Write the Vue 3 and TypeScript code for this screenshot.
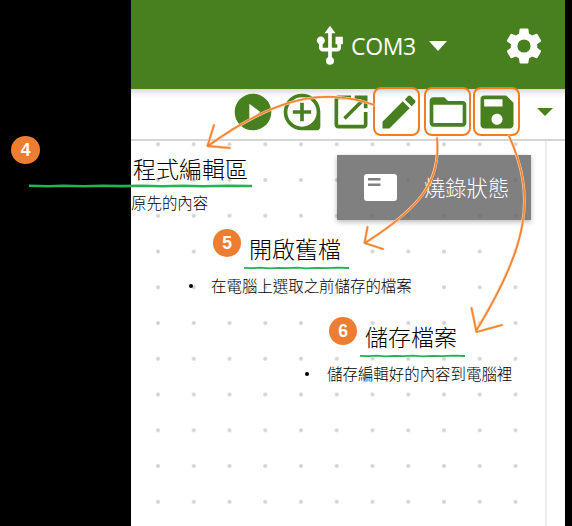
<script setup lang="ts">
interface Tool {
  name: string
  path: string
  marked: boolean
}

interface Note {
  id: number
  title: string
  detail: string
  bullet: boolean
}

const tools: Tool[] = [
  { name: 'play', marked: false, path: 'M12 2C6.48 2 2 6.48 2 12s4.48 10 10 10 10-4.48 10-10S17.52 2 12 2zm-2 14.5v-9l6 4.5-6 4.5z' },
  { name: 'add', marked: false, path: 'M12 2a10 10 0 0 0 0 20h8c1.1 0 2-.9 2-2v-8A10 10 0 0 0 12 2zm0 18a8 8 0 1 1 0-16 8 8 0 0 1 0 16zm1-13h-2v4H7v2h4v4h2v-4h4v-2h-4z' },
  { name: 'launch', marked: false, path: 'M19 19H5V5h7V3H5c-1.1 0-2 .9-2 2v14c0 1.1.9 2 2 2h14c1.1 0 2-.9 2-2v-7h-2v7zM14 3v2h3.59l-9.83 9.83 1.41 1.41L19 6.41V10h2V3h-7z' },
  { name: 'edit', marked: true, path: 'M3 17.25V21h3.75L17.81 9.94l-3.75-3.75L3 17.25zM20.71 7.04a1 1 0 0 0 0-1.41l-2.34-2.34a1 1 0 0 0-1.41 0l-1.83 1.83 3.75 3.75 1.83-1.83z' },
  { name: 'folder', marked: true, path: 'M20 6h-8l-2-2H4c-1.1 0-2 .9-2 2v12c0 1.1.9 2 2 2h16c1.1 0 2-.9 2-2V8c0-1.1-.9-2-2-2zm0 12H4V8h16v10z' },
  { name: 'save', marked: true, path: 'M17 3H5a2 2 0 0 0-2 2v14c0 1.1.9 2 2 2h14c1.1 0 2-.9 2-2V7l-4-4zm-5 16c-1.66 0-3-1.34-3-3s1.34-3 3-3 3 1.34 3 3-1.34 3-3 3zm3-10H5V5h10v4z' },
]

const notes: Note[] = [
  { id: 4, title: '程式編輯區', detail: '原先的內容', bullet: false },
  { id: 5, title: '開啟舊檔', detail: '在電腦上選取之前儲存的檔案', bullet: true },
  { id: 6, title: '儲存檔案', detail: '儲存編輯好的內容到電腦裡', bullet: true },
]

const arrows: string[] = [
  'M374 105C318 85 268 103 208 146M214 125L207.500 146L230 148',
  'M437 138C441 183 419 208 365 243M367.500 227L364.500 243L383 249',
  'M509 136C536 196 529 244 476 331M471.500 308L476.500 332L502 325',
]
</script>

<template>
  <div class="screen">
    <div class="window">
      <header class="header">
        <div class="port">
          <svg class="icon" viewBox="0 0 24 24"><path d="M15 7v4h1v2h-3V5h2l-3-4-3 4h2v8H8v-2.070c.7-.37 1.200-1.080 1.200-1.930 0-1.210-.99-2.200-2.200-2.200S4.800 7.790 4.800 9c0 .85.5 1.560 1.200 1.930V13c0 1.110.89 2 2 2h3v3.050c-.71.37-1.200 1.100-1.200 1.950a2.200 2.200 0 0 0 4.400 0c0-.85-.49-1.580-1.200-1.950V15h3c1.110 0 2-.89 2-2v-2h1V7h-4z" /></svg>
          <span class="port-name">COM3</span>
          <i class="caret"></i>
        </div>
        <svg class="icon" viewBox="0 0 24 24"><path d="M19.140 12.940c.04-.3.060-.61.060-.94 0-.32-.02-.64-.07-.94l2.030-1.580c.18-.14.230-.41.120-.61l-1.920-3.320c-.12-.22-.37-.29-.59-.22l-2.390.96c-.5-.38-1.030-.7-1.620-.94l-.36-2.540c-.04-.24-.24-.41-.48-.41h-3.840c-.24 0-.43.17-.47.41l-.36 2.540c-.59.24-1.130.57-1.620.94l-2.390-.96c-.22-.08-.47 0-.59.22L2.740 8.870c-.12.21-.08.470.12.61l2.030 1.580c-.05.3-.09.630-.09.94s.02.64.07.94l-2.030 1.580c-.18.14-.23.41-.12.61l1.920 3.320c.12.22.37.29.59.22l2.390-.96c.5.38 1.030.7 1.620.94l.36 2.540c.05.24.24.41.48.41h3.840c.24 0 .44-.17.47-.41l.36-2.540c.59-.24 1.130-.56 1.620-.94l2.390.96c.22.08.47 0 .59-.22l1.920-3.320c.12-.22.07-.47-.12-.61l-2.010-1.580zM12 15.600A3.600 3.600 0 1 1 12 8.400a3.600 3.600 0 0 1 0 7.200z" /></svg>
      </header>
      <nav class="toolbar">
        <div v-for="tool in tools" :key="tool.name" class="tool" :class="[tool.name, { marked: tool.marked }]">
          <svg class="icon" viewBox="0 0 24 24"><path :d="tool.path" fill-rule="evenodd" /></svg>
        </div>
        <i class="caret small"></i>
      </nav>
      <main class="workspace">
        <div class="canvas">
          <svg class="grid">
            <defs>
              <pattern id="dots" x="9.130" y="-14.600" width="35.750" height="35.750" patternUnits="userSpaceOnUse">
                <circle cx="17.870" cy="17.870" r="2" />
              </pattern>
            </defs>
            <rect width="100%" height="100%" fill="url(#dots)" />
          </svg>
        </div>
        <div class="status">
          <svg class="card" viewBox="0 0 33 27"><rect width="33" height="27" rx="3" fill="#fff" /><path d="M4 5.200h12.500M4 10.700h12.500" stroke="#808080" stroke-width="2.600" /></svg>
          <span>燒錄狀態</span>
        </div>
      </main>
    </div>

    <section v-for="note in notes" :key="note.id" class="note" :class="'note-' + note.id">
      <b class="badge">{{ note.id }}</b>
      <h2 class="title">{{ note.title }}</h2>
      <svg class="underline" preserveAspectRatio="none" viewBox="0 0 200 4">
        <path d="M0 1.800L17 2.200 31 1.700 49 2.300 66 1.800 83 2.100 101 1.700 119 2.300 138 1.800 156 2.200 178 1.700 200 2" />
      </svg>
      <p class="detail"><i v-if="note.bullet" class="bullet"></i>{{ note.detail }}</p>
    </section>

    <svg class="arrows" viewBox="0 0 572 526">
      <g v-for="arrow in arrows" :key="arrow">
        <path :d="arrow" class="halo" />
        <path :d="arrow" class="stroke" />
      </g>
    </svg>
  </div>
</template>

<style>
body { margin: 0; background: #000; }
</style>

<style scoped>
.screen {
  position: relative;
  width: 572px;
  height: 526px;
  overflow: hidden;
  background: #000;
  font-family: "Noto Sans CJK TC", sans-serif;
}
.window {
  display: flex;
  flex-direction: column;
  width: 434px;
  height: 526px;
  margin-left: 131px;
  background: #fff;
}
.icon { display: block; flex: none; width: 44px; height: 44px; fill: currentColor; }
.header {
  display: flex;
  flex: none;
  align-items: center;
  justify-content: flex-end;
  box-sizing: border-box;
  height: 89px;
  padding: 2px 19px 0 0;
  gap: 55px;
  color: #fff;
  background: #48801f;
}
.port { display: flex; align-items: center; }
.port-name {
  width: 78px;
  font: 400 23px/30px "Open Sans", sans-serif;
  letter-spacing: -0.350px;
}
.port .icon { margin-right: -1px; }
.caret {
  width: 0;
  height: 0;
  border: 9.500px solid transparent;
  border-top: 10px solid #fff;
  border-bottom: 0;
}
.toolbar {
  display: flex;
  flex: none;
  align-items: center;
  box-sizing: border-box;
  height: 52px;
  padding: 0 0 4px 100px;
  gap: 4.800px;
  color: #48801f;
  border-bottom: 2px solid #d5d5d5;
  background: linear-gradient(#d9d9d9, #f5f5f5 5px, #fff 10px);
}
.tool { position: relative; }
.marked::after {
  position: absolute;
  inset: -3px -1.500px -2px;
  box-sizing: border-box;
  border: 2px solid #ef7d24;
  border-radius: 8px;
  content: "";
}
.edit::after { right: 1.500px; left: -4.500px; }
.folder::after { right: -1px; left: -2px; }
.caret.small { border-width: 8.500px; border-top-color: #48801f; border-bottom: 0; margin-left: 13px; }
.workspace { position: relative; display: flex; flex: 1; }
.canvas { width: 414px; border-right: 2px solid #ececec; }
.grid { display: block; width: 100%; height: 100%; fill: #d3d3d3; }
.status {
  position: absolute;
  top: 14px;
  left: 206px;
  display: flex;
  align-items: center;
  box-sizing: border-box;
  width: 194px;
  height: 65px;
  padding-left: 27px;
  gap: 27px;
  color: #fff;
  background: rgba(96, 96, 96, 0.8);
  box-shadow: 0 2px 5px rgba(0, 0, 0, 0.28);
  font-size: 21.300px;
  font-weight: 300;
  line-height: 30px;
  white-space: nowrap;
}
.status span { margin-top: -2px; }
.card { flex: none; width: 33px; height: 27px; }
.note { position: absolute; color: #000; font-weight: 300; white-space: nowrap; }
.note-4 { top: 135px; left: 11px; }
.note-5 { top: 229px; left: 213px; }
.note-6 { top: 317px; left: 329px; }
.badge {
  position: absolute;
  top: 0;
  left: 0;
  width: 28px;
  height: 28px;
  border-radius: 50%;
  color: #fff;
  background: #ed7d31;
  font: 700 17.500px/28px "Liberation Sans", sans-serif;
  text-align: center;
}
.note-4 .badge { top: 1px; width: 29px; }
.title { margin: 4px 0 0 36px; font-size: 23px; font-weight: 300; line-height: 30px; }
.note-4 .title { margin: 18px 0 0 122px; }
.underline { display: block; width: 105px; height: 4px; margin: 3px 0 0 31px; fill: none; stroke: #20b455; stroke-width: 1.800; }
.note-4 .underline { width: 223px; margin: 1px 0 0 18px; stroke-width: 2.600; }
.detail { position: relative; margin: 4px 0 0 -2px; font-size: 15.450px; line-height: 22px; }
.note-4 .detail { margin: 3px 0 0 120px; }
.bullet { position: absolute; top: 10px; left: -22px; width: 4px; height: 4px; border-radius: 50%; background: #000; }
.arrows { position: absolute; inset: 0; width: 572px; height: 526px; fill: none; stroke-linecap: round; stroke-linejoin: round; }
.halo { stroke: #ffd2af; stroke-width: 2.800; }
.stroke { stroke: #f5832f; stroke-width: 1.700; stroke-dasharray: 7 0.700 3 0.500; }
</style>
